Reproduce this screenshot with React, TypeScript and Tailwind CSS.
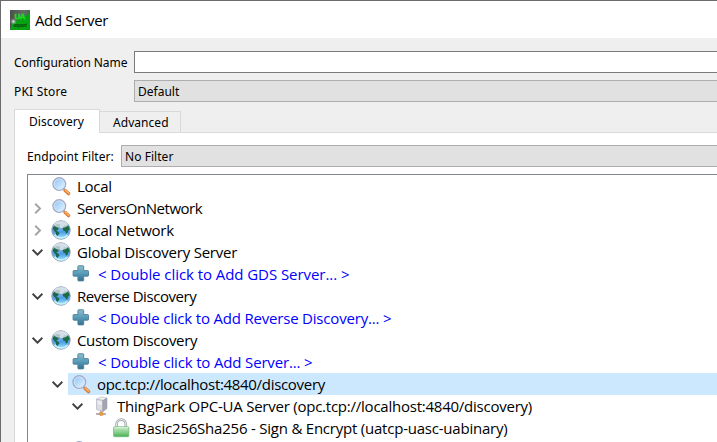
import type { ReactNode } from "react";

function Magnifier() {
  return (
    <svg width="20" height="20" viewBox="0 0 20 20" className="shrink-0">
      <defs>
        <linearGradient id="lens" x1="0" y1="0" x2="1" y2="1">
          <stop offset="0" stopColor="#8cc2f5" />
          <stop offset=".5" stopColor="#b9dcfb" />
          <stop offset="1" stopColor="#eef9ff" />
        </linearGradient>
      </defs>
      <path d="M12.5 12.6l2 2" stroke="#a6a6b0" strokeWidth="2" />
      <path d="M14.2 14.6l3.3 3" stroke="#d9783a" strokeWidth="3.4" strokeLinecap="round" />
      <path d="M14.4 14.2l3.2 2.9" stroke="#fbb060" strokeWidth="1.8" strokeLinecap="round" />
      <circle cx="8.3" cy="8.1" r="6.3" fill="url(#lens)" stroke="#a3aac6" strokeWidth="1.4" />
      <circle cx="8.3" cy="8.1" r="5.2" fill="none" stroke="#d5e6fa" strokeWidth=".9" />
    </svg>
  );
}

function Globe() {
  return (
    <svg width="20" height="20" viewBox="0 0 20 20" className="shrink-0">
      <defs>
        <linearGradient id="sea" x1="0" y1="0" x2="0" y2="1">
          <stop offset="0" stopColor="#b5c3d3" />
          <stop offset=".35" stopColor="#86b2dc" />
          <stop offset=".6" stopColor="#4b9ce6" />
          <stop offset="1" stopColor="#a5ecff" />
        </linearGradient>
      </defs>
      <circle cx="10" cy="10" r="9.2" fill="url(#sea)" stroke="#8c9bb2" strokeWidth="1" />
      <path d="M2 7.4L3.6 5.4l2.6-1.6 3.2.6-.8 2 .8 1.2-1.9 1-1 1.5-1.2.4 2.3 1.4 1 1.4-1.5 1.6-1 1.6-1.1-1.8-.2-2.2-1.8-2-1.3-1.6z" fill="#1d6650" />
      <path d="M12 7.2l1.2-1.7 3.7-.2 1.6 2.7.1 2-1.4.3-.5 2.2-1.5 1.3-1-2.6-1.8-.8-.8-1.6z" fill="#1d6a46" />
      <ellipse cx="10" cy="4.5" rx="7" ry="3.6" fill="#e7edf1" opacity=".72" />
      <path d="M3.6 14.8c2.8 3.9 9.8 4.2 13 .2" fill="none" stroke="#d2f8ff" strokeWidth="1.8" opacity=".8" />
    </svg>
  );
}

function Plus() {
  return (
    <svg width="20" height="20" viewBox="0 0 20 20" className="shrink-0">
      <defs>
        <linearGradient id="plus" x1="0" y1="0" x2="0" y2="1">
          <stop offset="0" stopColor="#8cc0d1" />
          <stop offset=".5" stopColor="#5a9bb6" />
          <stop offset="1" stopColor="#34718f" />
        </linearGradient>
      </defs>
      <path
        d="M7.6 1.8h4.4q.7 0 .7.7v4.1h4.1q.7 0 .7.7v4.2q0 .7-.7.7h-4.1v4q0 .7-.7.7H7.6q-.7 0-.7-.7v-4H2.8q-.7 0-.7-.7V7.3q0-.7.7-.7h4.1V2.5q0-.7.7-.7z"
        fill="url(#plus)"
        stroke="#4b7f97"
        strokeWidth=".9"
      />
    </svg>
  );
}

function Computer() {
  return (
    <svg width="20" height="20" viewBox="0 0 20 20" className="shrink-0">
      <path d="M10 14v3M5 18h10" stroke="#a39b96" strokeWidth="1.3" />
      <path d="M5.5 3.1L10.6.8l5.3 1.3-4 2.4z" fill="#f0f0f4" stroke="#b5b5c0" strokeWidth=".6" />
      <path d="M5.5 3.1l6.4 1.4v11l-6.4-2.1z" fill="#dcdce4" stroke="#aaaab6" strokeWidth=".6" />
      <path d="M11.9 4.5l4-2.4v10.5l-4 2.9z" fill="#a4a4b3" stroke="#9393a0" strokeWidth=".6" />
      <path d="M6.6 5.4l4.1.9M6.6 7.3l4.1.9" stroke="#fff" strokeWidth=".9" />
      <rect x="8.6" y="16.2" width="3.3" height="3.2" rx=".8" fill="#f6a144" stroke="#c97a36" strokeWidth=".6" />
    </svg>
  );
}

function Lock() {
  return (
    <svg width="20" height="20" viewBox="0 0 20 20" className="shrink-0">
      <defs>
        <linearGradient id="lock" x1="0" y1="0" x2="0" y2="1">
          <stop offset="0" stopColor="#c5e8c5" />
          <stop offset=".5" stopColor="#8ed391" />
          <stop offset="1" stopColor="#45b051" />
        </linearGradient>
      </defs>
      <path d="M5.6 9.5V6.2a4.6 4.6 0 0 1 9.2 0v3.3" fill="none" stroke="#9ba2a5" strokeWidth="2.6" />
      <path d="M5.6 9.5V6.2a4.6 4.6 0 0 1 9.2 0v3.3" fill="none" stroke="#e1e5e6" strokeWidth="1.2" />
      <rect x="2.6" y="8.8" width="15.2" height="9.9" rx="1" fill="url(#lock)" stroke="#73b778" strokeWidth=".8" />
      <path d="M3.5 9.8h13.4" stroke="#e6f6e5" strokeWidth=".9" />
    </svg>
  );
}

function AppLogo() {
  return (
    <svg width="20" height="20" viewBox="0 0 20 20" className="shrink-0">
      <defs>
        <linearGradient id="steel" x1="0" y1="0" x2="1" y2="0">
          <stop offset="0" stopColor="#4b514d" />
          <stop offset=".7" stopColor="#666e68" />
          <stop offset="1" stopColor="#426d43" />
        </linearGradient>
        <radialGradient id="glint">
          <stop offset="0" stopColor="#eef5ee" />
          <stop offset="1" stopColor="#7e9480" stopOpacity="0" />
        </radialGradient>
      </defs>
      <rect width="20" height="20" fill="#08a312" />
      <path d="M0 0h20v2C17 7 8 9 3 12L0 20z" fill="url(#steel)" />
      <circle cx="3.4" cy="11.5" r="3.6" fill="url(#glint)" />
      <text x="4.6" y="8.6" fontSize="8" fontWeight="700" fontFamily="Liberation Sans, sans-serif" fill="#12e01f" stroke="#12e01f" strokeWidth=".4" textLength="11">UA</text>
      <text x="3.4" y="16.8" fontSize="5.5" fontStyle="italic" fontWeight="700" fontFamily="Liberation Sans, sans-serif" fill="#07500d" textLength="13.5">expert</text>
    </svg>
  );
}

function Chevron({ open }: { open?: boolean }) {
  return (
    <svg width="12" height="12" viewBox="0 0 12 12" className="shrink-0" fill="none" strokeWidth="1.9">
      {open ? <path d="M1.6 3.8l4.9 4.8 4.9-4.8" stroke="#404040" /> : <path d="M4.2 1.8L9 6.5l-4.8 4.7" stroke="#a3a3a3" />}
    </svg>
  );
}

type RowProps = { className: string; icon: ReactNode; text: string; textClass: string; expand?: "open" | "closed" };

function Row({ className, icon, text, textClass, expand }: RowProps) {
  return (
    <div className={`flex h-[22px] shrink-0 items-center ${className}`}>
      <span className="mr-2 flex w-3">{expand && <Chevron open={expand === "open"} />}</span>
      {icon}
      <span className={textClass}>{text}</span>
    </div>
  );
}

export default function App() {
  return (
    <div className="flex h-[442px] w-[717px] flex-col overflow-hidden whitespace-nowrap border-l border-t border-[#6b6b6b] bg-[#efefef] font-['Noto_Sans',sans-serif] text-[12px] text-black">
      <header className="flex h-[37px] shrink-0 items-center bg-white pl-[9px]">
        <AppLogo />
        <h1 className="ml-[5px] font-['Open_Sans',sans-serif] text-[15px] leading-5 tracking-[-0.36px]">Add Server</h1>
      </header>

      <div className="mt-[13px] flex h-[22px] shrink-0 items-center pl-[13px]">
        <label className="w-[120px] pt-0.5 tracking-[-0.08px]">Configuration Name</label>
        <div className="h-[22px] flex-1 border border-r-0 border-[#7a7a7a] bg-white" />
      </div>
      <div className="mt-[7px] flex h-[22px] shrink-0 items-center pl-[13px]">
        <label className="w-[120px] pt-0.5 tracking-[0.2px]">PKI Store</label>
        <div className="flex h-[22px] flex-1 items-center border border-r-0 border-[#adadad] bg-[#e1e1e1] pl-[3px] pt-0.5">Default</div>
      </div>

      <div className="mt-[7px] flex h-6 shrink-0 items-end pl-[13px]">
        <div className="flex h-6 w-[86px] items-center border border-b-0 border-[#d9d9d9] bg-white pl-[14px] tracking-[0.08px]">Discovery</div>
        <div className="flex h-[22px] w-[81px] items-center border border-l-0 border-[#d9d9d9] pl-[13px] pt-0.5 tracking-[0.05px]">Advanced</div>
        <div className="h-px flex-1 bg-[#d9d9d9]" />
      </div>

      <main className="ml-[13px] flex min-h-0 flex-1 flex-col border-l border-[#d9d9d9] bg-white pl-3 pt-3">
        <div className="flex h-[22px] shrink-0 items-center">
          <label className="w-[94px] pt-0.5 tracking-[0.07px]">Endpoint Filter:</label>
          <div className="flex h-[22px] flex-1 items-center border border-r-0 border-[#adadad] bg-[#e1e1e1] pl-[3px] pt-0.5 tracking-[0.05px]">No Filter</div>
        </div>

        <div className="mt-[7px] flex min-h-0 flex-1 flex-col overflow-hidden border-l border-t border-[#828790] font-['Open_Sans',sans-serif] text-[15px] leading-[22px]">
          <Row className="pl-[3px]" icon={<Magnifier />} text="Local" textClass="ml-[6px] tracking-[-0.3px]" />
          <Row className="pl-[3px]" expand="closed" icon={<Magnifier />} text="ServersOnNetwork" textClass="ml-[6px] tracking-[-0.46px]" />
          <Row className="pl-[3px]" expand="closed" icon={<Globe />} text="Local Network" textClass="ml-[6px] tracking-[-0.22px]" />
          <Row className="pl-[3px]" expand="open" icon={<Globe />} text="Global Discovery Server" textClass="ml-[6px] tracking-[-0.22px]" />
          <Row className="pl-[23px]" icon={<Plus />} text="< Double click to Add GDS Server... >" textClass="ml-[7px] tracking-[-0.06px] text-[#0000ff]" />
          <Row className="pl-[3px]" expand="open" icon={<Globe />} text="Reverse Discovery" textClass="ml-[6px] tracking-[-0.44px]" />
          <Row className="pl-[23px]" icon={<Plus />} text="< Double click to Add Reverse Discovery... >" textClass="ml-[7px] tracking-[-0.19px] text-[#0000ff]" />
          <Row className="pl-[3px]" expand="open" icon={<Globe />} text="Custom Discovery" textClass="ml-[6px] tracking-[-0.34px]" />
          <Row className="pl-[23px]" icon={<Plus />} text="< Double click to Add Server... >" textClass="ml-[7px] tracking-[-0.16px] text-[#0000ff]" />
          <div className="flex h-[22px] shrink-0 items-center pl-[23px]">
            <span className="mr-[5px] flex w-3">
              <Chevron open />
            </span>
            <div className="flex h-[22px] flex-1 items-center bg-[#cce8ff] pl-[3px]">
              <Magnifier />
              <span className="ml-[6px] tracking-[-0.31px]">opc.tcp://localhost:4840/discovery</span>
            </div>
          </div>
          <Row className="pl-[43px]" expand="open" icon={<Computer />} text="ThingPark OPC-UA Server (opc.tcp://localhost:4840/discovery)" textClass="ml-[6px] tracking-[-0.235px]" />
          <Row className="pl-[63px]" icon={<Lock />} text="Basic256Sha256 - Sign & Encrypt (uatcp-uasc-uabinary)" textClass="ml-[6px] tracking-[-0.22px]" />
          <Row className="pl-[23px]" icon={<Magnifier />} text="" textClass="" />
        </div>
      </main>
    </div>
  );
}
